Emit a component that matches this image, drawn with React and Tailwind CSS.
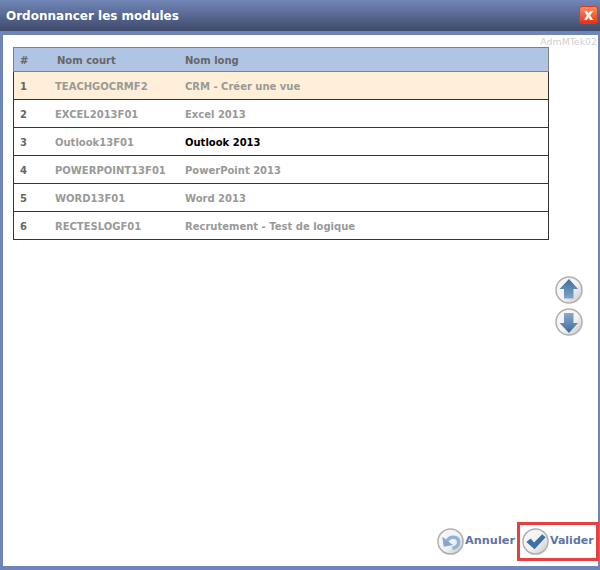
const rows = [
  { id: 1, code: "TEACHGOCRMF2", name: "CRM - Créer une vue", active: true },
  { id: 2, code: "EXCEL2013F01", name: "Excel 2013" },
  { id: 3, code: "Outlook13F01", name: "Outlook 2013", current: true },
  { id: 4, code: "POWERPOINT13F01", name: "PowerPoint 2013" },
  { id: 5, code: "WORD13F01", name: "Word 2013" },
  { id: 6, code: "RECTESLOGF01", name: "Recrutement - Test de logique" },
]

function RoundIcon({ size, children }) {
  return (
    <svg width={size} height={size} viewBox="0 0 28 28" className="shrink-0">
      <defs>
        <linearGradient id="ball" x1="0" y1="0" x2="1" y2="1">
          <stop offset="0" stopColor="#f8f8f8" />
          <stop offset="0.55" stopColor="#f2f2f2" />
          <stop offset="1" stopColor="#c4c4c4" />
        </linearGradient>
        <linearGradient id="blue" x1="0" y1="0" x2="0" y2="1">
          <stop offset="0" stopColor="#3f6f9f" />
          <stop offset="1" stopColor="#7ea3c8" />
        </linearGradient>
        <linearGradient id="blueDown" x1="0" y1="0" x2="0" y2="1">
          <stop offset="0" stopColor="#8aa9cb" />
          <stop offset="1" stopColor="#3f6a9c" />
        </linearGradient>
      </defs>
      <circle cx="14" cy="14" r="13" fill="url(#ball)" stroke="#b0b0b0" strokeWidth="1.5" />
      {children}
    </svg>
  )
}

function Row({ row }) {
  return (
    <div className={`flex h-[28px] items-center border-b border-[#333333] pt-[1px] ${row.active ? "bg-[#ffefd8]" : "bg-white"}`}>
      <span className="w-[41px] pl-[6px] text-[#666666]">{row.id}</span>
      <span className="w-[130px] text-[#999999]">{row.code}</span>
      <span className={row.current ? "text-black" : "text-[#999999]"}>{row.name}</span>
    </div>
  )
}

export default function App() {
  return (
    <div className="flex h-[570px] w-[600px] flex-col bg-[#6f84b7] font-['DejaVu_Sans',Verdana,sans-serif] text-[10px] font-bold">
      <div className="flex h-[31px] shrink-0 items-center justify-between bg-gradient-to-b from-[#7287b8] to-[#3f4a6b] pl-[6px] pr-[2px]">
        <span className="text-[12px] text-white">Ordonnancer les modules</span>
        <div className="mt-[-1px] flex h-[18px] w-[19px] items-center justify-center rounded-[3px] border border-[#d8401c] bg-gradient-to-b from-[#f98a60] to-[#ea2d05] text-[15px] leading-none text-white">
          x
        </div>
      </div>
      <div className="mt-[4px] mb-[4px] ml-[3px] mr-[2px] flex flex-1 flex-col bg-white">
        <div className="h-[12px] pr-[1px] pt-[1px] text-right text-[9.4px] font-normal leading-[12px] text-[#d0d0d0]">
          AdmMTek02
        </div>
        <div className="flex flex-1 flex-col">
          <div className="ml-[10px] w-[536px] border-x border-[#333333]">
            <div className="-mx-[1px] flex h-[25px] items-center border border-[#808080] bg-[#b0c4e3] pt-[1px] text-[#666666]">
              <span className="w-[41px] pl-[6px]">#</span>
              <span className="w-[130px] pl-[2px]">Nom court</span>
              <span>Nom long</span>
            </div>
            {rows.map((row) => (
              <Row key={row.id} row={row} />
            ))}
          </div>
          <div className="mr-[15px] mt-[36px] flex flex-col items-end gap-[4px]">
            <RoundIcon size={28}>
              <path d="M14 3 L23 13 H18.5 V22.5 H9 V13 H4.5 Z" fill="url(#blue)" />
            </RoundIcon>
            <RoundIcon size={28}>
              <path d="M9 5 H18.5 V15 H23 L14 25 L4.5 15 H9 Z" fill="url(#blueDown)" />
            </RoundIcon>
          </div>
          <div className="mt-auto mb-[5px] flex items-center justify-end">
            <div className="flex items-center gap-[1px] text-[11.3px] text-[#5f73a5]">
              <RoundIcon size={27}>
                <path d="M10 14 C13 8 22 8 22.5 14.5 C22.5 18 19.5 20.5 16 21" fill="none" stroke="#8db3d9" strokeWidth="3.5" />
                <path d="M5.5 9 L7 19.5 L16.5 17.5 Z" fill="#7ea8d2" />
              </RoundIcon>
              <span>Annuler</span>
            </div>
            <div className="ml-[2px] mr-[-1px] flex h-[39px] w-[82px] items-center gap-[1px] border-[3px] border-[#e84040] pl-[2px] text-[11px] text-[#5f73a5]">
              <RoundIcon size={27}>
                <path d="M4.5 14.5 L9 11 L12.5 15 L21 6.5 L24.5 9.5 L13 22 Z" fill="#3f6fa5" />
              </RoundIcon>
              <span>Valider</span>
            </div>
          </div>
        </div>
      </div>
    </div>
  )
}
